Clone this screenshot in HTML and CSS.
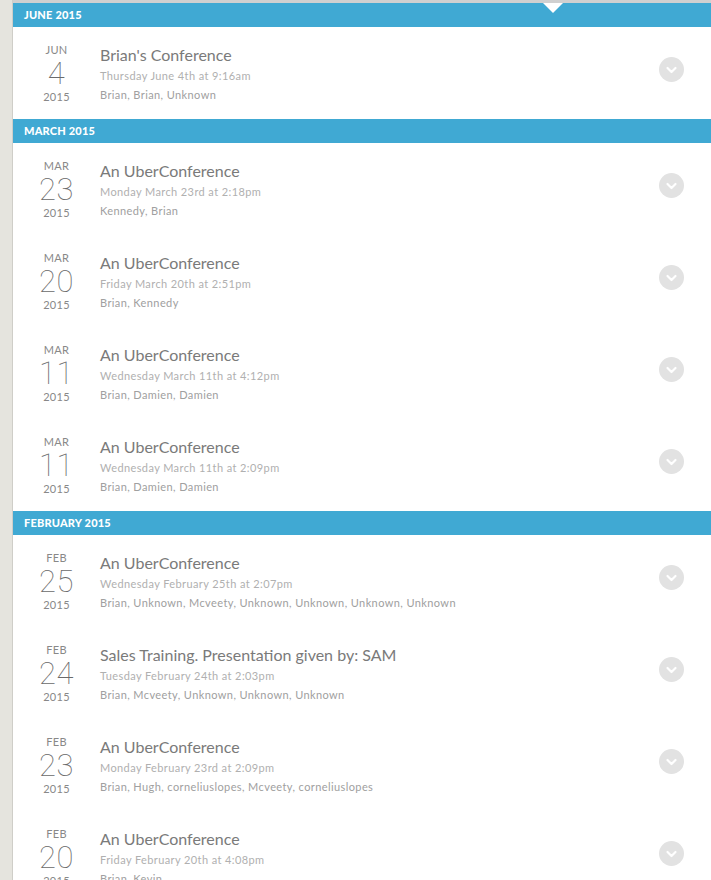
FILE: index.html
```html
<!DOCTYPE html>
<html>
<head>
<meta charset="utf-8">
<link rel="stylesheet" href="styles.css">
</head>
<body>
<div class="page">
  <aside class="rail"></aside>
  <main class="feed">
    <span class="notch"></span>

    <h2 class="month">JUNE 2015</h2>
    <div class="item">
      <div class="date"><span class="mon">JUN</span><span class="day">4</span><span class="yr">2015</span></div>
      <div class="info"><div class="title">Brian's Conference</div><div class="when">Thursday June 4th at 9:16am</div><div class="who">Brian, Brian, Unknown</div></div>
      <span class="toggle"><svg viewBox="0 0 25 25" width="25" height="25"><path d="M8.5 11 L12.5 15 L16.5 11" fill="none" stroke="#fff" stroke-width="2.2" stroke-linecap="round" stroke-linejoin="round"/></svg></span>
    </div>

    <h2 class="month">MARCH 2015</h2>
    <div class="item">
      <div class="date"><span class="mon">MAR</span><span class="day">23</span><span class="yr">2015</span></div>
      <div class="info"><div class="title">An UberConference</div><div class="when">Monday March 23rd at 2:18pm</div><div class="who">Kennedy, Brian</div></div>
      <span class="toggle"><svg viewBox="0 0 25 25" width="25" height="25"><path d="M8.5 11 L12.5 15 L16.5 11" fill="none" stroke="#fff" stroke-width="2.2" stroke-linecap="round" stroke-linejoin="round"/></svg></span>
    </div>
    <div class="item">
      <div class="date"><span class="mon">MAR</span><span class="day">20</span><span class="yr">2015</span></div>
      <div class="info"><div class="title">An UberConference</div><div class="when">Friday March 20th at 2:51pm</div><div class="who">Brian, Kennedy</div></div>
      <span class="toggle"><svg viewBox="0 0 25 25" width="25" height="25"><path d="M8.5 11 L12.5 15 L16.5 11" fill="none" stroke="#fff" stroke-width="2.2" stroke-linecap="round" stroke-linejoin="round"/></svg></span>
    </div>
    <div class="item">
      <div class="date"><span class="mon">MAR</span><span class="day">11</span><span class="yr">2015</span></div>
      <div class="info"><div class="title">An UberConference</div><div class="when">Wednesday March 11th at 4:12pm</div><div class="who">Brian, Damien, Damien</div></div>
      <span class="toggle"><svg viewBox="0 0 25 25" width="25" height="25"><path d="M8.5 11 L12.5 15 L16.5 11" fill="none" stroke="#fff" stroke-width="2.2" stroke-linecap="round" stroke-linejoin="round"/></svg></span>
    </div>
    <div class="item">
      <div class="date"><span class="mon">MAR</span><span class="day">11</span><span class="yr">2015</span></div>
      <div class="info"><div class="title">An UberConference</div><div class="when">Wednesday March 11th at 2:09pm</div><div class="who">Brian, Damien, Damien</div></div>
      <span class="toggle"><svg viewBox="0 0 25 25" width="25" height="25"><path d="M8.5 11 L12.5 15 L16.5 11" fill="none" stroke="#fff" stroke-width="2.2" stroke-linecap="round" stroke-linejoin="round"/></svg></span>
    </div>

    <h2 class="month">FEBRUARY 2015</h2>
    <div class="item">
      <div class="date"><span class="mon">FEB</span><span class="day">25</span><span class="yr">2015</span></div>
      <div class="info"><div class="title">An UberConference</div><div class="when">Wednesday February 25th at 2:07pm</div><div class="who">Brian, Unknown, Mcveety, Unknown, Unknown, Unknown, Unknown</div></div>
      <span class="toggle"><svg viewBox="0 0 25 25" width="25" height="25"><path d="M8.5 11 L12.5 15 L16.5 11" fill="none" stroke="#fff" stroke-width="2.2" stroke-linecap="round" stroke-linejoin="round"/></svg></span>
    </div>
    <div class="item">
      <div class="date"><span class="mon">FEB</span><span class="day">24</span><span class="yr">2015</span></div>
      <div class="info"><div class="title">Sales Training. Presentation given by: SAM</div><div class="when">Tuesday February 24th at 2:03pm</div><div class="who">Brian, Mcveety, Unknown, Unknown, Unknown</div></div>
      <span class="toggle"><svg viewBox="0 0 25 25" width="25" height="25"><path d="M8.5 11 L12.5 15 L16.5 11" fill="none" stroke="#fff" stroke-width="2.2" stroke-linecap="round" stroke-linejoin="round"/></svg></span>
    </div>
    <div class="item">
      <div class="date"><span class="mon">FEB</span><span class="day">23</span><span class="yr">2015</span></div>
      <div class="info"><div class="title">An UberConference</div><div class="when">Monday February 23rd at 2:09pm</div><div class="who">Brian, Hugh, corneliuslopes, Mcveety, corneliuslopes</div></div>
      <span class="toggle"><svg viewBox="0 0 25 25" width="25" height="25"><path d="M8.5 11 L12.5 15 L16.5 11" fill="none" stroke="#fff" stroke-width="2.2" stroke-linecap="round" stroke-linejoin="round"/></svg></span>
    </div>
    <div class="item">
      <div class="date"><span class="mon">FEB</span><span class="day">20</span><span class="yr">2015</span></div>
      <div class="info"><div class="title">An UberConference</div><div class="when">Friday February 20th at 4:08pm</div><div class="who">Brian, Kevin</div></div>
      <span class="toggle"><svg viewBox="0 0 25 25" width="25" height="25"><path d="M8.5 11 L12.5 15 L16.5 11" fill="none" stroke="#fff" stroke-width="2.2" stroke-linecap="round" stroke-linejoin="round"/></svg></span>
    </div>
  </main>
</div>
</body>
</html>
```

FILE: styles.css
```css
html, body {
  margin: 0;
  padding: 0;
  background: #fff;
  height: 880px;
  overflow: hidden;
}
body {
  font-family: Lato, "Open Sans", "Liberation Sans", sans-serif;
}
.page {
  display: flex;
  min-height: 880px;
}
.rail {
  width: 12px;
  flex: 0 0 12px;
  background: #e5e4de;
  border-right: 1px solid #cfcec8;
}
.feed {
  flex: 1;
  position: relative;
  border-top: 3px solid #d0d0d0;
}
.notch {
  position: absolute;
  top: 0;
  left: 530px;
  width: 0;
  height: 0;
  border-left: 10px solid transparent;
  border-right: 10px solid transparent;
  border-top: 10px solid #fff;
}
.month {
  margin: 0;
  height: 24px;
  line-height: 24px;
  background: #40a9d3;
  color: #fff;
  font-size: 11px;
  font-weight: 900;
  padding-left: 11px;
  letter-spacing: 0.2px;
}
.item {
  height: 92px;
  display: flex;
  align-items: flex-start;
  box-sizing: border-box;
}
.date {
  width: 87px;
  flex: 0 0 87px;
  display: flex;
  flex-direction: column;
  align-items: center;
  padding-top: 17px;
  color: #888;
}
.mon {
  font-size: 11px;
  line-height: 12px;
  color: #888;
  letter-spacing: 0.3px;
}
.day {
  font-family: Roboto, Lato, sans-serif;
  font-size: 31px;
  font-weight: 100;
  line-height: 32px;
  color: #6a6a6a;
  margin-top: 2px;
  letter-spacing: 0.5px;
}
.yr {
  font-size: 11px;
  line-height: 12px;
  margin-top: 1px;
  color: #888;
  letter-spacing: 0.3px;
}
.info {
  flex: 1;
  padding-top: 18px;
}
.title {
  font-size: 16px;
  line-height: 20px;
  color: #7a7a7a;
}
.when {
  font-size: 11px;
  line-height: 19px;
  color: #b0b0b0;
  margin-top: 1px;
  letter-spacing: 0.4px;
}
.who {
  font-size: 11px;
  line-height: 19px;
  color: #a0a0a0;
  letter-spacing: 0.4px;
}
.toggle {
  width: 25px;
  height: 25px;
  border-radius: 50%;
  background: #e2e2e2;
  margin: 30px 27px 0 0;
  display: flex;
}
```
